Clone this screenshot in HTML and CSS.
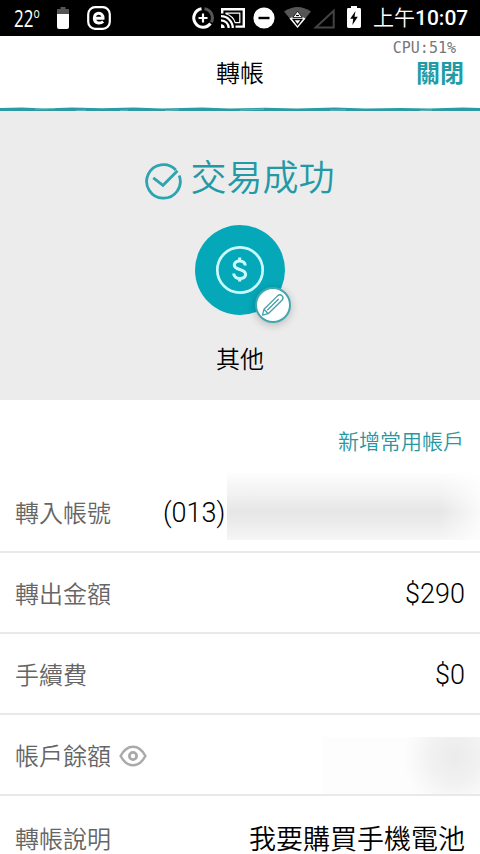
FILE: index.html
```html
<!DOCTYPE html>
<html lang="zh-Hant">
<head>
	<meta charset="UTF-8" />
	<meta name="viewport" content="width=device-width, initial-scale=1.0" />
	<title>轉帳</title>
	<link rel="stylesheet" href="styles.css">
</head>
<body>
	<div class="status-bar">
		<span class="temp">22<span class="degree">o</span></span>
		<svg class="battery-small" width="12" height="22" viewBox="0 0 12 22">
			<path d="M3.5 0h5v2H12v6H0V2h3.5z" fill="#555" />
			<path d="M0 7h12v13q0 2-2 2H2q-2 0-2-2z" fill="#fff" />
		</svg>
		<svg class="app-badge" width="24" height="24" viewBox="0 0 24 24" fill="none" stroke="#fff">
			<rect x="1.2" y="1.2" width="21.6" height="21.6" rx="7" stroke-width="2.2" />
			<path d="M7.3 12.3H16C16.3 5.7 7.3 5.5 7.3 12C7.3 17.8 13 18 16.2 15.6" stroke-width="3" />
		</svg>
		<div class="status-icons">
			<svg class="saver" width="22" height="22" viewBox="0 0 22 22" fill="none">
				<path d="M12.5 1.7A9.3 9.3 0 0 1 19.3 15.3" stroke="#555" stroke-width="3" />
				<path d="M9.5 1.7A9.3 9.3 0 1 0 18.5 16.5" stroke="#fff" stroke-width="3" />
				<path d="M11 6.5v9M6.5 11h9" stroke="#fff" stroke-width="2.2" />
			</svg>
			<svg class="cast" width="24" height="20" viewBox="0 0 24 20" fill="none" stroke="#fff">
				<path d="M1.2 5.5V1.2h21.6v17.4H14.5" stroke-width="2.4" />
				<path d="M5 5.2h13.8v9.4h-4.6Q12 8 5 5.8z" stroke="#fff" stroke-width="1.2" />
				<path d="M0 8.2A11.8 11.8 0 0 1 11.8 20M0 12.3A7.7 7.7 0 0 1 7.7 20" stroke-width="2.2" />
				<path d="M0 16.3A3.7 3.7 0 0 1 3.7 20H0z" fill="#fff" stroke="none" />
			</svg>
			<svg class="dnd" width="22" height="22" viewBox="0 0 22 22">
				<circle cx="11" cy="11" r="10.6" fill="#fff" />
				<path d="M5.5 11h11" stroke="#000" stroke-width="2.4" />
			</svg>
			<svg class="wifi" width="27" height="22" viewBox="0 0 27 22">
				<path d="M0 4.5Q13.5-4.5 27 4.5L13.5 21z" fill="#555" />
				<path d="M5.5 11.5Q13.5 6 21.5 11.5L13.5 21z" fill="#fff" />
				<path d="M8.8 10.5L13.5 4.3l4.7 6.2z" fill="#fff" stroke="#000" stroke-width=".8" />
				<path d="M9.2 12.5h8.6l-4.3 5.5z" fill="#fff" stroke="#000" stroke-width="1.3" />
				<path d="M12 8.5h3" stroke="#000" stroke-width="1.2" />
			</svg>
			<svg class="signal" width="22" height="21" viewBox="0 0 22 21">
				<path d="M2.7 19.6L20.7 2.7v16.9z" fill="none" stroke="#444" stroke-width="2" />
			</svg>
			<svg class="charging" width="14" height="22" viewBox="0 0 14 22">
				<path d="M4 0h6v2h2.6Q14 2 14 3.4v17.2q0 1.4-1.4 1.4H1.4Q0 22 0 20.6V3.4Q0 2 1.4 2H4z" fill="#fff" />
				<path d="M8.5 5L3.2 12.7h3L5.4 19l5.4-8.2H7.5z" fill="#000" />
			</svg>
			<span class="clock"><span class="ampm">上午</span>10:07</span>
		</div>
	</div>

	<header class="header">
		<h1>轉帳</h1>
		<a class="close">關閉</a>
		<span class="cpu">CPU:51%</span>
		<svg class="brush" width="480" height="6" viewBox="0 0 480 6">
			<path d="M0 2.1L22 1.6l22 .8L72 1.6l30 .7 32-.9 28 1 40-.8 28 .8 35-.7 32 .7 38-.8 30 .9 36-.6 28 .5 34-.8 25 .5V5H0z" fill="#2d9ba5" />
			<path d="M35 3.1l20-.5M76 4.6l10-.5M120 4.5l8-.5M165 4.5l14-.7M240 4.2l24-1.2M330 4.3l16-.5M420 4.5l12-.5" stroke="#73bdc3" stroke-width=".8" />
		</svg>
	</header>

	<section class="result">
		<div class="result-title">
			<svg width="38" height="38" viewBox="0 0 38 38" fill="none" stroke="#2da4ae" stroke-width="2.8">
				<path d="M35.2 13.5A16.8 16.8 0 1 1 31.8 8" />
				<path d="M9.3 15.8L19 23.3 33.5 8.8" />
			</svg>
			<h2>交易成功</h2>
		</div>
		<div class="category">
			<svg class="coin" width="50" height="50" viewBox="0 0 50 50" fill="none" stroke="#c9fbfd">
				<circle cx="25" cy="25" r="22.7" stroke-width="2.7" />
				<path d="M30.2 20.5C30 14.5 19.3 14.5 19.3 20C19.3 26 30.6 23 30.6 29.5C30.6 35 19 35 18.7 28.5M24.7 12.5v4M24.7 32.5v4" stroke-width="3.1" />
			</svg>
			<div class="edit">
				<svg width="26" height="26" viewBox="0 0 26 26" fill="none" stroke="#459fa7" stroke-width="1.3" stroke-linejoin="round">
					<path d="M2.5 23.2L4 17.2 17.8 3.6Q20 1.9 22 3.8T22.2 8L8.2 21.7zM4 17.2l4.2 4.5M7.2 18.3L18.7 7" />
				</svg>
			</div>
		</div>
		<p class="category-name">其他</p>
	</section>

	<main>
		<a class="add-account">新增常用帳戶</a>
		<div class="row">
			<span class="label">轉入帳號</span>
			<span class="value account">(013)</span>
			<span class="mask mask-account"></span>
		</div>
		<div class="row">
			<span class="label">轉出金額</span>
			<span class="value">$290</span>
		</div>
		<div class="row">
			<span class="label">手續費</span>
			<span class="value">$0</span>
		</div>
		<div class="row">
			<span class="label">帳戶餘額</span>
			<svg class="eye" width="28" height="22" viewBox="0 0 28 22" fill="none" stroke="#aaa">
				<path d="M1.6 11Q6.5 1.8 14 1.8T26.4 11Q21.5 20.2 14 20.2T1.6 11z" stroke-width="2.5" />
				<circle cx="14" cy="11" r="3.6" stroke-width="2.8" />
			</svg>
			<span class="mask mask-balance"></span>
		</div>
		<div class="row note">
			<span class="label">轉帳說明</span>
			<span class="value">我要購買手機電池</span>
		</div>
	</main>
</body>
</html>
```
FILE: styles.css
```css
* {
	box-sizing: border-box;
}

body {
	margin: 0;
	height: 854px;
	overflow: hidden;
	background: #fff;
	color: #000;
	font-family: Roboto, "Noto Sans CJK TC", sans-serif;
	font-weight: 350;
}

h1,
h2,
p {
	margin: 0;
	font-weight: 350;
}

svg {
	display: block;
	flex-shrink: 0;
}

.status-bar {
	height: 36px;
	padding: 0 12px 0 14px;
	display: flex;
	align-items: center;
	background: #000;
	color: #fff;
}

.temp {
	display: flex;
	width: 43px;
	font-family: "Open Sans", sans-serif;
	font-size: 23px;
	font-weight: 400;
	line-height: 36px;
	transform: scaleX(0.74);
	transform-origin: left;
}

.degree {
	font-size: 14px;
	line-height: 25px;
}

.app-badge {
	margin-left: 18px;
}

.status-icons {
	margin-left: auto;
	display: flex;
	align-items: center;
}

.cast {
	margin-left: 7px;
}

.dnd {
	margin-left: 8px;
}

.wifi {
	margin-left: 9px;
}

.signal {
	margin-left: 2px;
}

.charging {
	margin: 0 12px 2px 12px;
}

.clock {
	width: 95px;
	font-size: 21px;
	font-weight: 500;
	line-height: 38px;
	white-space: nowrap;
}

.ampm {
	font-weight: 350;
}

.header {
	position: relative;
	height: 75px;
	display: grid;
	grid-template-columns: 1fr auto 1fr;
	align-items: center;
	padding: 0 16px 4px;
}

.header h1 {
	grid-column: 2;
	font-size: 24px;
}

.close {
	justify-self: end;
	color: #209ca8;
	font-size: 24px;
	font-weight: 700;
}

.cpu {
	position: absolute;
	top: 3px;
	right: 24px;
	color: #777;
	font-family: "DejaVu Sans Mono", monospace;
	font-size: 15px;
	line-height: 18px;
}

.brush {
	position: absolute;
	left: 0;
	bottom: -1px;
}

.result {
	height: 289px;
	padding-top: 42px;
	display: flex;
	flex-direction: column;
	align-items: center;
	background: #ececec;
}

.result-title {
	height: 52px;
	display: flex;
	align-items: center;
	gap: 8px;
	margin-right: 1px;
	color: #2399a5;
}

.result-title svg {
	margin-top: 3px;
}

.result-title h2 {
	font-size: 36px;
	line-height: 52px;
}

.category {
	position: relative;
	width: 90px;
	height: 90px;
	margin-top: 20px;
	display: grid;
	place-items: center;
	border-radius: 50%;
	background: #04a8b9;
}

.edit {
	position: absolute;
	top: 62px;
	left: 60px;
	width: 36px;
	height: 36px;
	display: grid;
	place-items: center;
	border: 2px solid #42a8b0;
	border-radius: 50%;
	background: #fff;
	box-shadow: 0 2px 8px rgba(0, 0, 0, 0.22);
}

.category-name {
	margin-top: 27px;
	font-size: 24px;
	line-height: 36px;
}

.add-account {
	display: block;
	height: 72px;
	padding: 27px 16px 0;
	color: #2797a2;
	font-size: 21px;
	line-height: 30px;
	text-align: right;
}

.row {
	position: relative;
	height: 81px;
	padding: 0 15px;
	display: flex;
	align-items: center;
	border-bottom: 2px solid #e9e9e9;
}

.label {
	color: #666;
	font-size: 24px;
}

.value {
	margin-left: auto;
	padding-top: 2px;
	font-size: 27px;
	font-weight: 300;
}

.account {
	margin-left: 52px;
}

.eye {
	margin: 2px 0 0 8px;
}

/* blurred patches over the private numbers */
.mask {
	position: absolute;
	right: 0;
}

.mask-account {
	top: 1px;
	width: 253px;
	height: 67px;
	background:
		linear-gradient(to right, transparent 84%, rgba(255, 255, 255, 0.8)),
		linear-gradient(#fdfdfd, #f3f3f3 28%, #e6e6e6 58%, #ececec 75%, #f6f6f6);
}

.mask-balance {
	top: 22px;
	width: 157px;
	height: 57px;
	background: radial-gradient(ellipse 52px 56px at 132px 20px, #ebebeb, #f1f1f1 45%, #f8f8f8 75%, #fdfdfd);
}

/* last row, only partly on screen */
.note {
	height: 58px;
	align-items: flex-start;
	border: 0;
	line-height: 44px;
}

.note .label {
	padding-top: 22px;
}

.note .value {
	padding-top: 22px;
	font-weight: 350;
}
```
